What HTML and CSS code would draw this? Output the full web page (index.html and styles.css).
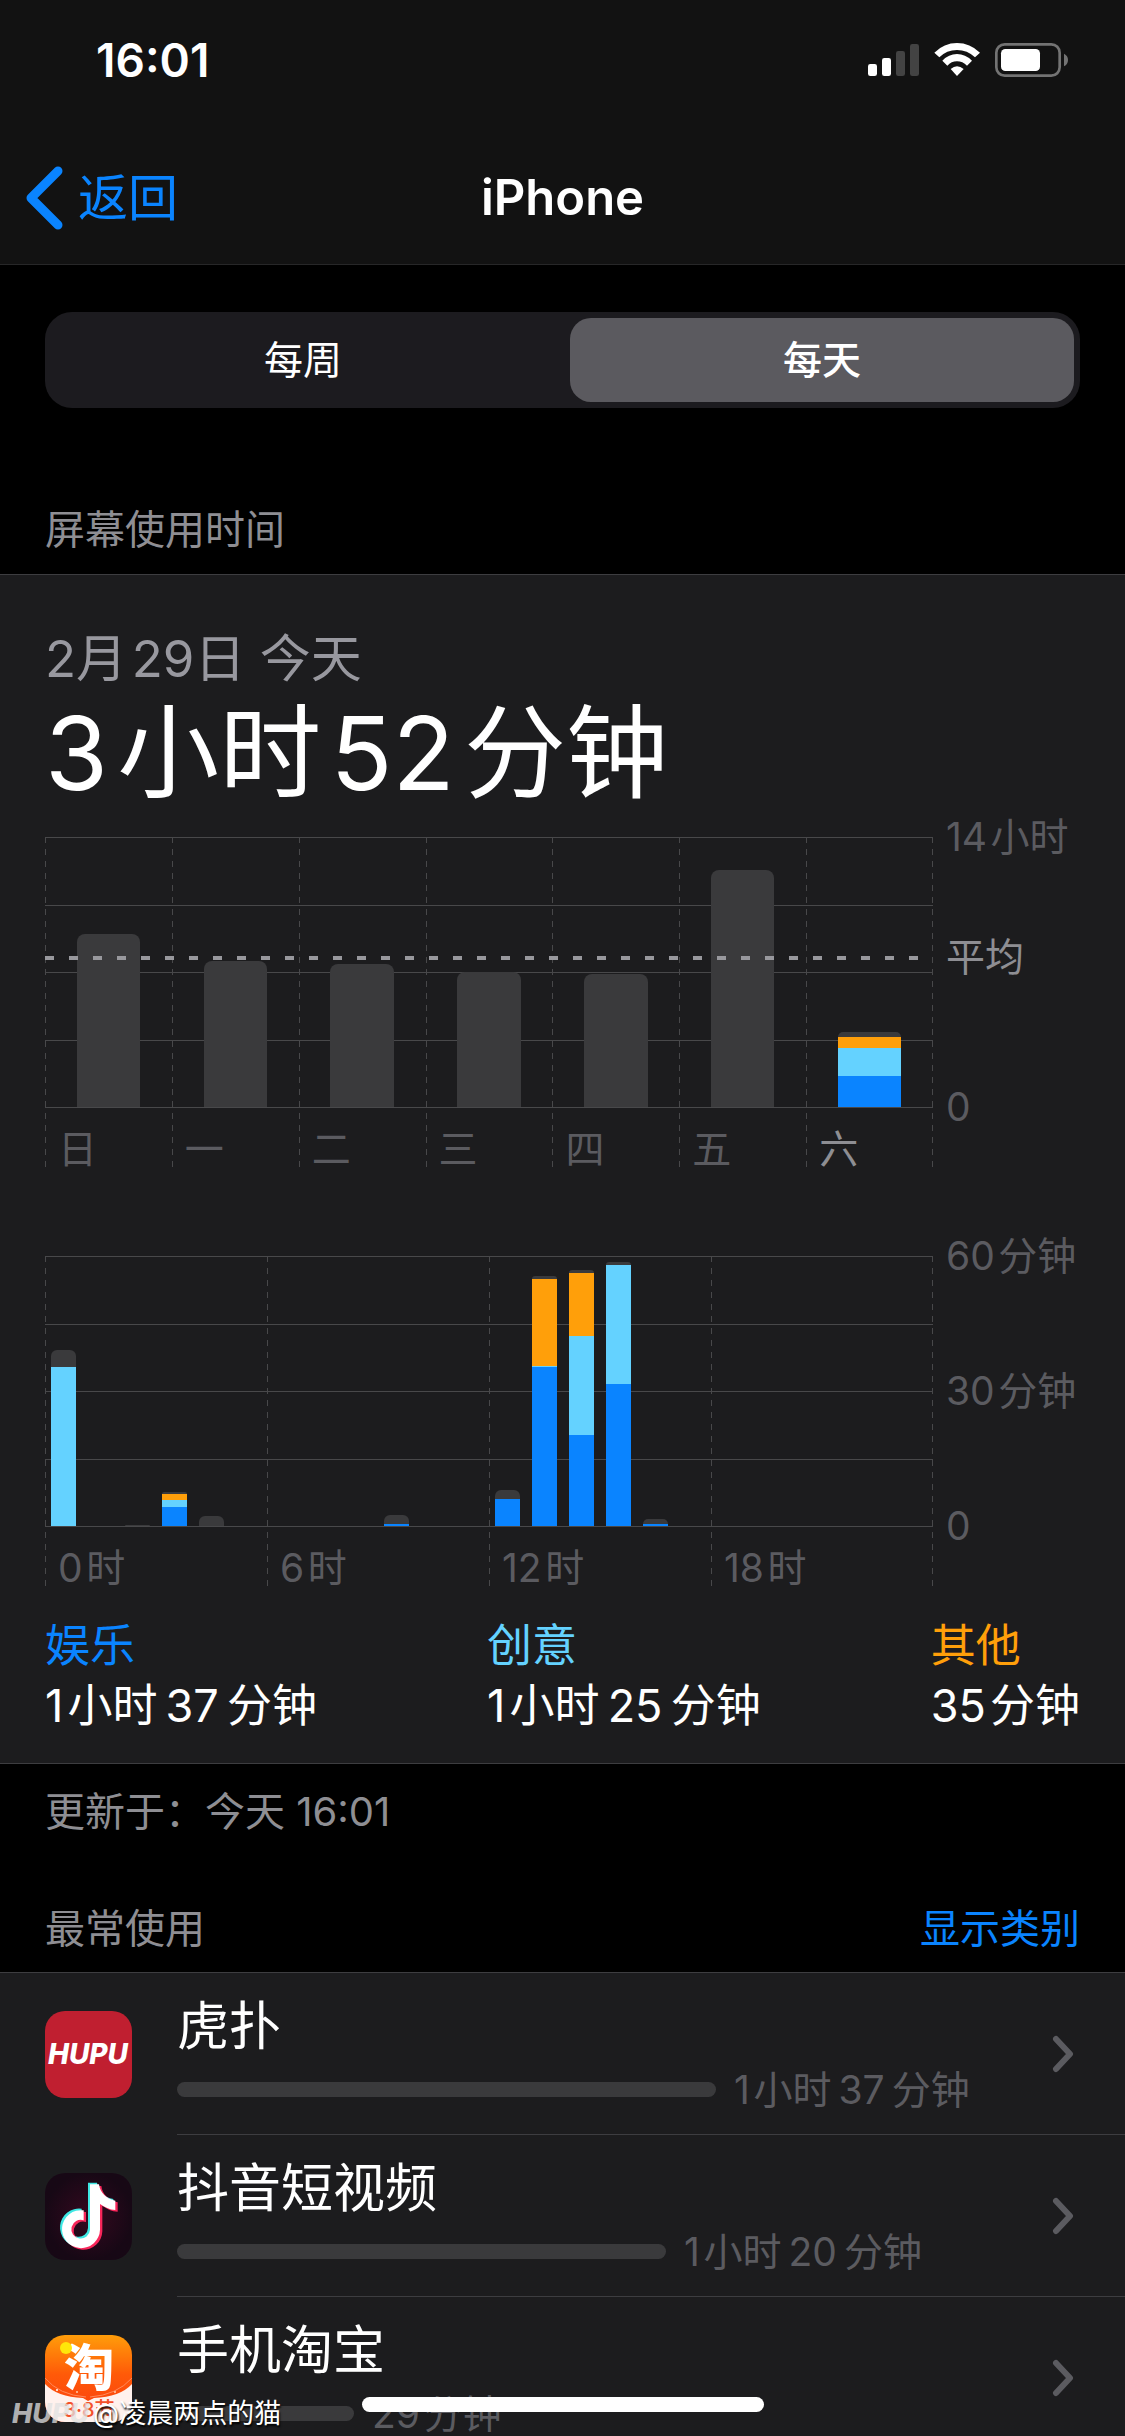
FILE: index.html
```html
<!DOCTYPE html>
<html lang="zh-CN">
<head>
  <meta charset="UTF-8" />
  <meta name="viewport" content="width=device-width, initial-scale=1" />
  <title>屏幕使用时间</title>
  <link rel="stylesheet" href="styles.css">
</head>
<body>
  <div class="screen">
    <header class="header">
      <!-- 状态栏 -->
      <div class="status">
        <span class="time">16:01</span>
        <svg class="status-icons" viewBox="84 69 600 102" aria-hidden="true">
          <g fill="#fff">
            <rect x="84" y="132" width="27" height="36" rx="7" />
            <rect x="126" y="114" width="27" height="54" rx="7" />
            <rect x="168" y="93" width="27" height="75" rx="7" fill="#434343" />
            <rect x="210" y="72" width="27" height="96" rx="7" fill="#434343" />
            <path d="M283 98 Q312 69 351 69 Q390 69 420 98 L405 112 Q382 90 351 90 Q320 90 298 112 Z" />
            <path d="M307 122 Q326 102 351 102 Q376 102 396 122 L381 137 Q368 124 351 124 Q334 124 322 137 Z" />
            <path d="M332 147 Q351 131 371 147 L351 168 Z" />
            <rect x="483" y="87" width="117" height="66" rx="13" />
          </g>
          <rect x="469" y="73" width="190" height="94" rx="25" fill="none" stroke="#737373" stroke-width="8" />
          <path d="M672 101 Q684 107 684 120 Q684 133 672 139 Z" fill="#737373" />
        </svg>
      </div>

      <!-- 导航栏 -->
      <nav class="nav">
        <a class="back" href="#">
          <svg viewBox="0 0 38 64" aria-hidden="true"><path d="M33 5 L6 32 L33 59" /></svg>
          返回
        </a>
        <h1>iPhone</h1>
      </nav>
    </header>

    <main>
      <div class="segment">
        <input type="radio" name="range" id="week">
        <label for="week">每周</label>
        <input type="radio" name="range" id="day" checked>
        <label for="day">每天</label>
      </div>

      <h2 class="section-title first">屏幕使用时间</h2>
      <section class="card">
        <p class="date">2月&hairsp;29日 今天</p>
        <p class="total">3&hairsp;小时&hairsp;52&hairsp;分钟</p>

        <!-- 每周图表 -->
        <div class="chart">
          <div class="plot days">
            <div class="lines"><i></i><i></i><i></i><i></i></div>
            <div class="col">
              <div class="bar"><i class="rest" style="height:173px"></i></div>
              <span>日</span>
            </div>
            <div class="col">
              <div class="bar"><i class="rest" style="height:146px"></i></div>
              <span>一</span>
            </div>
            <div class="col">
              <div class="bar"><i class="rest" style="height:143px"></i></div>
              <span>二</span>
            </div>
            <div class="col">
              <div class="bar"><i class="rest" style="height:135px"></i></div>
              <span>三</span>
            </div>
            <div class="col">
              <div class="bar"><i class="rest" style="height:133px"></i></div>
              <span>四</span>
            </div>
            <div class="col">
              <div class="bar"><i class="rest" style="height:237px"></i></div>
              <span>五</span>
            </div>
            <div class="col today">
              <div class="bar">
                <i class="rest" style="height:5px"></i>
                <i class="other" style="height:11px"></i>
                <i class="create" style="height:28px"></i>
                <i class="fun" style="height:31px"></i>
              </div>
              <span>六</span>
            </div>
            <div class="average"></div>
          </div>
          <div class="axis week-axis">
            <span>14&hairsp;小时</span>
            <span class="avg">平均</span>
            <span>0</span>
          </div>
        </div>

        <!-- 每小时图表 -->
        <div class="chart hourly">
          <div class="plot hours">
            <div class="lines"><i></i><i></i><i></i><i></i></div>
            <div class="col">
              <div class="slots">
                <div class="bar">
                  <i class="rest" style="height:17px"></i>
                  <i class="create" style="height:159px"></i>
                </div>
                <div class="bar"></div>
                <div class="bar"><i class="rest" style="height:1px"></i></div>
                <div class="bar">
                  <i class="rest" style="height:2px"></i>
                  <i class="other" style="height:6px"></i>
                  <i class="create" style="height:7px"></i>
                  <i class="fun" style="height:19px"></i>
                </div>
                <div class="bar"><i class="rest" style="height:10px"></i></div>
                <div class="bar"></div>
              </div>
              <span>0&hairsp;时</span>
            </div>
            <div class="col">
              <div class="slots">
                <div class="bar"></div>
                <div class="bar"></div>
                <div class="bar"></div>
                <div class="bar">
                  <i class="rest" style="height:9px"></i>
                  <i class="fun" style="height:2px"></i>
                </div>
                <div class="bar"></div>
                <div class="bar"></div>
              </div>
              <span>6&hairsp;时</span>
            </div>
            <div class="col">
              <div class="slots">
                <div class="bar">
                  <i class="rest" style="height:9px"></i>
                  <i class="fun" style="height:27px"></i>
                </div>
                <div class="bar">
                  <i class="rest" style="height:3px"></i>
                  <i class="other" style="height:87px"></i>
                  <i class="create" style="height:1px"></i>
                  <i class="fun" style="height:159px"></i>
                </div>
                <div class="bar">
                  <i class="rest" style="height:3px"></i>
                  <i class="other" style="height:63px"></i>
                  <i class="create" style="height:99px"></i>
                  <i class="fun" style="height:91px"></i>
                </div>
                <div class="bar">
                  <i class="rest" style="height:3px"></i>
                  <i class="create" style="height:119px"></i>
                  <i class="fun" style="height:142px"></i>
                </div>
                <div class="bar">
                  <i class="rest" style="height:5px"></i>
                  <i class="fun" style="height:2px"></i>
                </div>
                <div class="bar"></div>
              </div>
              <span>12&hairsp;时</span>
            </div>
            <div class="col">
              <div class="slots"></div>
              <span>18&hairsp;时</span>
            </div>
          </div>
          <div class="axis">
            <span>60&hairsp;分钟</span>
            <span>30&hairsp;分钟</span>
            <span>0</span>
          </div>
        </div>

        <dl class="legend">
          <div>
            <dt class="fun-text">娱乐</dt>
            <dd>1&hairsp;小时&thinsp;37&thinsp;分钟</dd>
          </div>
          <div>
            <dt class="create-text">创意</dt>
            <dd>1&hairsp;小时&thinsp;25&thinsp;分钟</dd>
          </div>
          <div>
            <dt class="other-text">其他</dt>
            <dd>35&hairsp;分钟</dd>
          </div>
        </dl>
      </section>
      <p class="updated">更新于：今天 16:01</p>

      <!-- 最常使用 -->
      <div class="list-head">
        <h2 class="section-title">最常使用</h2>
        <button type="button">显示类别</button>
      </div>
      <ul class="apps">
        <li>
          <a href="#">
            <svg class="app-icon" viewBox="0 0 87 87" aria-hidden="true">
              <rect width="87" height="87" rx="20" fill="#c01f30" />
              <text class="hupu-logo" x="43" y="53" text-anchor="middle">HUPU</text>
            </svg>
            <div class="app">
              <div class="info">
                <p class="name">虎扑</p>
                <div class="usage"><i style="width:539px"></i><span>1&hairsp;小时&thinsp;37&thinsp;分钟</span></div>
              </div>
              <svg class="chevron" viewBox="0 0 22 38" aria-hidden="true"><path d="M4 4 L18 19 L4 34" /></svg>
            </div>
          </a>
        </li>
        <li>
          <a href="#">
            <svg class="app-icon" viewBox="15 18 261 261" aria-hidden="true">
              <defs>
                <radialGradient id="night">
                  <stop offset="0" stop-color="#35091f" />
                  <stop offset="1" stop-color="#170815" />
                </radialGradient>
                <path id="note" d="M150 52 H177 C180 76 198 96 226 101 V129 C208 128 194 121 180 111 V188 A57 57 0 1 1 131 130 V160 A28 28 0 1 0 150 188 Z" />
              </defs>
              <rect x="15" y="18" width="261" height="261" rx="60" fill="url(#night)" />
              <use href="#note" x="-6" y="-5" fill="#3ee8e4" />
              <use href="#note" x="7" y="5" fill="#f8265a" />
              <use href="#note" fill="#fff" />
            </svg>
            <div class="app">
              <div class="info">
                <p class="name">抖音短视频</p>
                <div class="usage"><i style="width:489px"></i><span>1&hairsp;小时&thinsp;20&thinsp;分钟</span></div>
              </div>
              <svg class="chevron" viewBox="0 0 22 38" aria-hidden="true"><path d="M4 4 L18 19 L4 34" /></svg>
            </div>
          </a>
        </li>
        <li>
          <a href="#">
            <svg class="app-icon" viewBox="0 0 87 87" aria-hidden="true">
              <defs>
                <linearGradient id="orange" x2="0" y2="1">
                  <stop offset="0" stop-color="#ff9d0a" />
                  <stop offset=".45" stop-color="#ff5a08" />
                  <stop offset="1" stop-color="#f93b12" />
                </linearGradient>
                <clipPath id="tile"><rect width="87" height="87" rx="20" /></clipPath>
              </defs>
              <g clip-path="url(#tile)">
                <rect width="87" height="87" fill="url(#orange)" />
                <path d="M0 49 Q12 62 38 63 L43 66 L49 63 Q75 62 87 49 V87 H0 Z" fill="#fff1ed" />
                <path d="M0 43 Q14 60 41 62 M87 43 Q72 60 45 62" fill="none" stroke="#ff8a5c" stroke-width="1" />
                <circle cx="12" cy="55" r="1" fill="#fff" />
                <circle cx="32" cy="57" r="1" fill="#ffc9a8" />
                <circle cx="70" cy="57" r="1" fill="#ffc9a8" />
              </g>
              <text class="tao" x="44" y="51" text-anchor="middle">淘</text>
              <circle cx="21" cy="13" r="6" fill="#ffe60a" />
              <text class="fest" x="44" y="82" text-anchor="middle">3·8节</text>
            </svg>
            <div class="app">
              <div class="info">
                <p class="name">手机淘宝</p>
                <div class="usage"><i style="width:177px"></i><span>29&hairsp;分钟</span></div>
              </div>
              <svg class="chevron" viewBox="0 0 22 38" aria-hidden="true"><path d="M4 4 L18 19 L4 34" /></svg>
            </div>
          </a>
        </li>
      </ul>
    </main>

    <!-- 水印和底部横条 -->
    <p class="watermark"><em>HUPU</em><span>@凌晨两点的猫</span></p>
    <div class="home-bar"></div>
  </div>
</body>
</html>
```
FILE: styles.css
```css
* {
  box-sizing: border-box;
}
body {
  margin: 0;
  background: #000;
  color: #fff;
  font-family: Inter, "Noto Sans CJK SC", sans-serif;
  font-size: 39px;
  line-height: 48px;
}
h1, h2, p, dl, dd, ul {
  margin: 0;
  padding: 0;
  font-weight: 400;
}
a {
  color: inherit;
  text-decoration: none;
}
.screen {
  position: relative;
  height: 100vh;
  overflow: hidden;
}

/* 顶部 */
.header {
  background: #121212;
  border-bottom: 1px solid #272728;
}
.status {
  display: flex;
  align-items: center;
  justify-content: space-between;
  height: 132px;
  padding: 0 57px 12px 96px;
}
.time {
  font-size: 46px;
  font-weight: 600;
}
.status-icons {
  width: 200px;
  height: 34px;
}
.nav {
  display: grid;
  grid-template-columns: 1fr auto 1fr;
  align-items: center;
  height: 132px;
  padding: 0 25px;
}
.nav h1 {
  font-size: 49px;
  font-weight: 600;
}
.back {
  display: flex;
  align-items: center;
  gap: 15px;
  color: #0a84ff;
  font-size: 50px;
}
.back svg {
  width: 38px;
  height: 64px;
  fill: none;
  stroke: #0a84ff;
  stroke-width: 9;
  stroke-linecap: round;
  stroke-linejoin: round;
}

/* 分段控件 */
.segment {
  display: grid;
  grid-template-columns: 1fr 1fr;
  gap: 15px;
  height: 96px;
  margin: 47px 45px 0;
  padding: 6px;
  border-radius: 27px;
  background: #1c1b1f;
}
.segment input {
  position: absolute;
  opacity: 0;
}
.segment label {
  border-radius: 21px;
  line-height: 84px;
  text-align: center;
}
.segment input:checked + label {
  background: #5b5a5f;
  font-weight: 500;
}

.section-title {
  color: #8e8e93;
  font-size: 40px;
}
.section-title.first {
  padding: 98px 45px 20px;
}

/* 使用时间 */
.card {
  padding: 54px 45px 28px;
  border-top: 1px solid #3d3d40;
  border-bottom: 1px solid #3d3d40;
  background: #1c1c1e;
}
.date {
  color: #98989f;
  font-size: 51px;
  line-height: 60px;
}
.total {
  margin-top: 4px;
  font-size: 102px;
  line-height: 120px;
}
.chart {
  display: grid;
  grid-template-columns: 1fr 147px;
  margin-top: 24px;
}
.chart.hourly {
  margin-top: 89px;
}
.plot {
  position: relative;
  display: grid;
  height: 330px;
  background: repeating-linear-gradient(to bottom, #48484a 0 6px, transparent 6px 12px) 100% 0 / 1px 100% no-repeat;
}
.days {
  grid-template-columns: repeat(7, 1fr);
}
.hours {
  grid-template-columns: repeat(4, 1fr);
}
.lines {
  position: absolute;
  top: 0;
  left: 0;
  right: 0;
  display: flex;
  flex-direction: column;
  height: 271px;
  border-bottom: 1px solid #48484a;
}
.lines i {
  flex: 1;
  border-top: 1px solid #48484a;
}
.col {
  position: relative;
  background: repeating-linear-gradient(to bottom, #48484a 0 6px, transparent 6px 12px) 0 0 / 1px 100% no-repeat;
}
.col > span {
  display: block;
  padding: 18px 0 0 13px;
  color: #5b5b60;
}
.col.today > span {
  color: #8e8e93;
}
.bar {
  display: flex;
  flex-direction: column;
  justify-content: flex-end;
  height: 270px;
}
.days .bar {
  width: 50%;
  margin: 0 auto;
}
.slots {
  display: grid;
  grid-template-columns: repeat(6, 1fr);
  height: 270px;
}
.hours .bar {
  width: 70%;
  margin: 0 auto;
}
.days .rest {
  border-radius: 8px 8px 0 0;
}
.hours .rest {
  border-radius: 6px 6px 0 0;
}
.rest {
  background: #3a3a3c;
}
.other {
  background: #ff9f0a;
}
.create {
  background: #64d2ff;
}
.fun {
  background: #0a84ff;
}
.average {
  position: absolute;
  top: 119px;
  left: 0;
  right: 0;
  height: 4px;
  background: repeating-linear-gradient(to right, #98989d 0 9px, transparent 9px 24px);
}
.axis {
  display: flex;
  flex-direction: column;
  justify-content: space-between;
  height: 318px;
  margin-top: -24px;
  padding-left: 13px;
  color: #5b5b60;
  white-space: nowrap;
}
.week-axis .avg {
  margin-bottom: 30px;
  color: #8e8e93;
}
.legend {
  display: flex;
  justify-content: space-between;
  margin-top: 30px;
  font-size: 45px;
  line-height: 60px;
}
.fun-text {
  color: #0a84ff;
}
.create-text {
  color: #64d2ff;
}
.other-text {
  color: #ff9f0a;
}
.card {
  padding-bottom: 27px;
}
.updated {
  padding: 24px 45px 0;
  color: #8e8e93;
  font-size: 40px;
}

/* 应用列表 */
.list-head {
  display: flex;
  justify-content: space-between;
  padding: 69px 45px 19px;
}
.list-head button {
  padding: 0;
  border: none;
  background: none;
  color: #0a84ff;
  font: inherit;
  font-size: 40px;
}
.apps {
  list-style: none;
  border-top: 1px solid #3d3d40;
  background: #1c1c1e;
}
.apps a {
  display: flex;
  align-items: center;
  gap: 45px;
  padding-left: 45px;
}
.app-icon {
  flex: none;
  width: 87px;
  height: 87px;
}
.app {
  display: flex;
  flex: 1;
  align-items: center;
  justify-content: space-between;
  height: 162px;
  padding-right: 51px;
  border-bottom: 1px solid #3d3d40;
}
.info {
  padding-top: 3px;
}
.name {
  font-size: 52px;
  line-height: 60px;
}
.usage {
  display: flex;
  align-items: center;
  gap: 18px;
  margin-top: 9px;
  color: #5b5b60;
}
.usage i {
  height: 15px;
  border-radius: 8px;
  background: #3a3a3c;
}
.chevron {
  width: 22px;
  height: 38px;
  fill: none;
  stroke: #5b5b60;
  stroke-width: 6;
  stroke-linecap: round;
  stroke-linejoin: round;
}
.hupu-logo {
  fill: #fff;
  font-size: 28px;
  font-style: italic;
  font-weight: 800;
}
.tao {
  fill: #fff;
  font-family: "Noto Sans CJK SC", sans-serif;
  font-size: 50px;
  font-weight: 900;
}
.fest {
  fill: #f4502a;
  font-size: 20px;
  font-weight: 500;
}

/* 水印 */
.watermark {
  position: absolute;
  left: 12px;
  bottom: 6px;
  display: flex;
  align-items: center;
  gap: 4px;
  font-size: 27px;
  line-height: 32px;
}
.watermark em {
  color: rgba(225, 225, 225, 0.75);
  font-weight: 800;
}
.watermark span {
  text-shadow: 1px 2px 2px #000;
}
.home-bar {
  position: absolute;
  bottom: 24px;
  left: 50%;
  width: 402px;
  height: 15px;
  margin-left: -201px;
  border-radius: 8px;
  background: #fff;
}
```
